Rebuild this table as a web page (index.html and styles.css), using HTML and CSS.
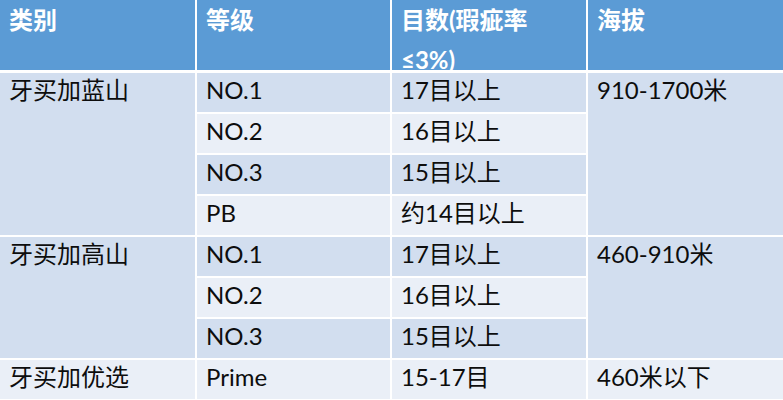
FILE: index.html
```html
<!DOCTYPE html>
<html lang="zh-CN">
<head>
<meta charset="utf-8">
<link rel="stylesheet" href="styles.css">
</head>
<body>
<div class="table">
  <div class="cell head">类别</div>
  <div class="cell head">等级</div>
  <div class="cell head">目数(瑕疵率<br>≤3%)</div>
  <div class="cell head">海拔</div>

  <div class="cell dark span4 c1">牙买加蓝山</div>
  <div class="cell dark">NO.1</div>
  <div class="cell dark">17目以上</div>
  <div class="cell dark span4 c4">910-1700米</div>

  <div class="cell light">NO.2</div>
  <div class="cell light">16目以上</div>

  <div class="cell dark">NO.3</div>
  <div class="cell dark">15目以上</div>

  <div class="cell light">PB</div>
  <div class="cell light">约14目以上</div>

  <div class="cell dark span3 c1">牙买加高山</div>
  <div class="cell dark">NO.1</div>
  <div class="cell dark">17目以上</div>
  <div class="cell dark span3 c4">460-910米</div>

  <div class="cell light">NO.2</div>
  <div class="cell light">16目以上</div>

  <div class="cell dark">NO.3</div>
  <div class="cell dark">15目以上</div>

  <div class="cell light">牙买加优选</div>
  <div class="cell light">Prime</div>
  <div class="cell light">15-17目</div>
  <div class="cell light">460米以下</div>
</div>
</body>
</html>
```

FILE: styles.css
```css
html, body {
  margin: 0;
  padding: 0;
  background: #ffffff;
}
body {
  width: 783px;
  height: 400px;
  overflow: hidden;
  font-family: "Lato", "Noto Sans CJK SC", sans-serif;
}
.table {
  display: grid;
  grid-template-columns: 195px 193px 194px 1fr;
  grid-template-rows: 71px repeat(8, 39px);
  column-gap: 2px;
  row-gap: 2px;
  background: #ffffff;
  width: 783px;
}
.cell {
  font-size: 24px;
  line-height: 30px;
  color: #0d0d0d;
  padding: 2px 8px 0 9px;
  box-sizing: border-box;
  white-space: nowrap;
}
.head {
  background: #5b9bd5;
  color: #ffffff;
  font-weight: bold;
  line-height: 40px;
  padding-top: 0;
  border-bottom: 1px solid #ffffff;
}
.dark { background: #d2deef; }
.light { background: #eaeff7; }
.span4 { grid-row: span 4; }
.span3 { grid-row: span 3; }
.c1 { grid-column: 1; }
.c4 { grid-column: 4; }
```
